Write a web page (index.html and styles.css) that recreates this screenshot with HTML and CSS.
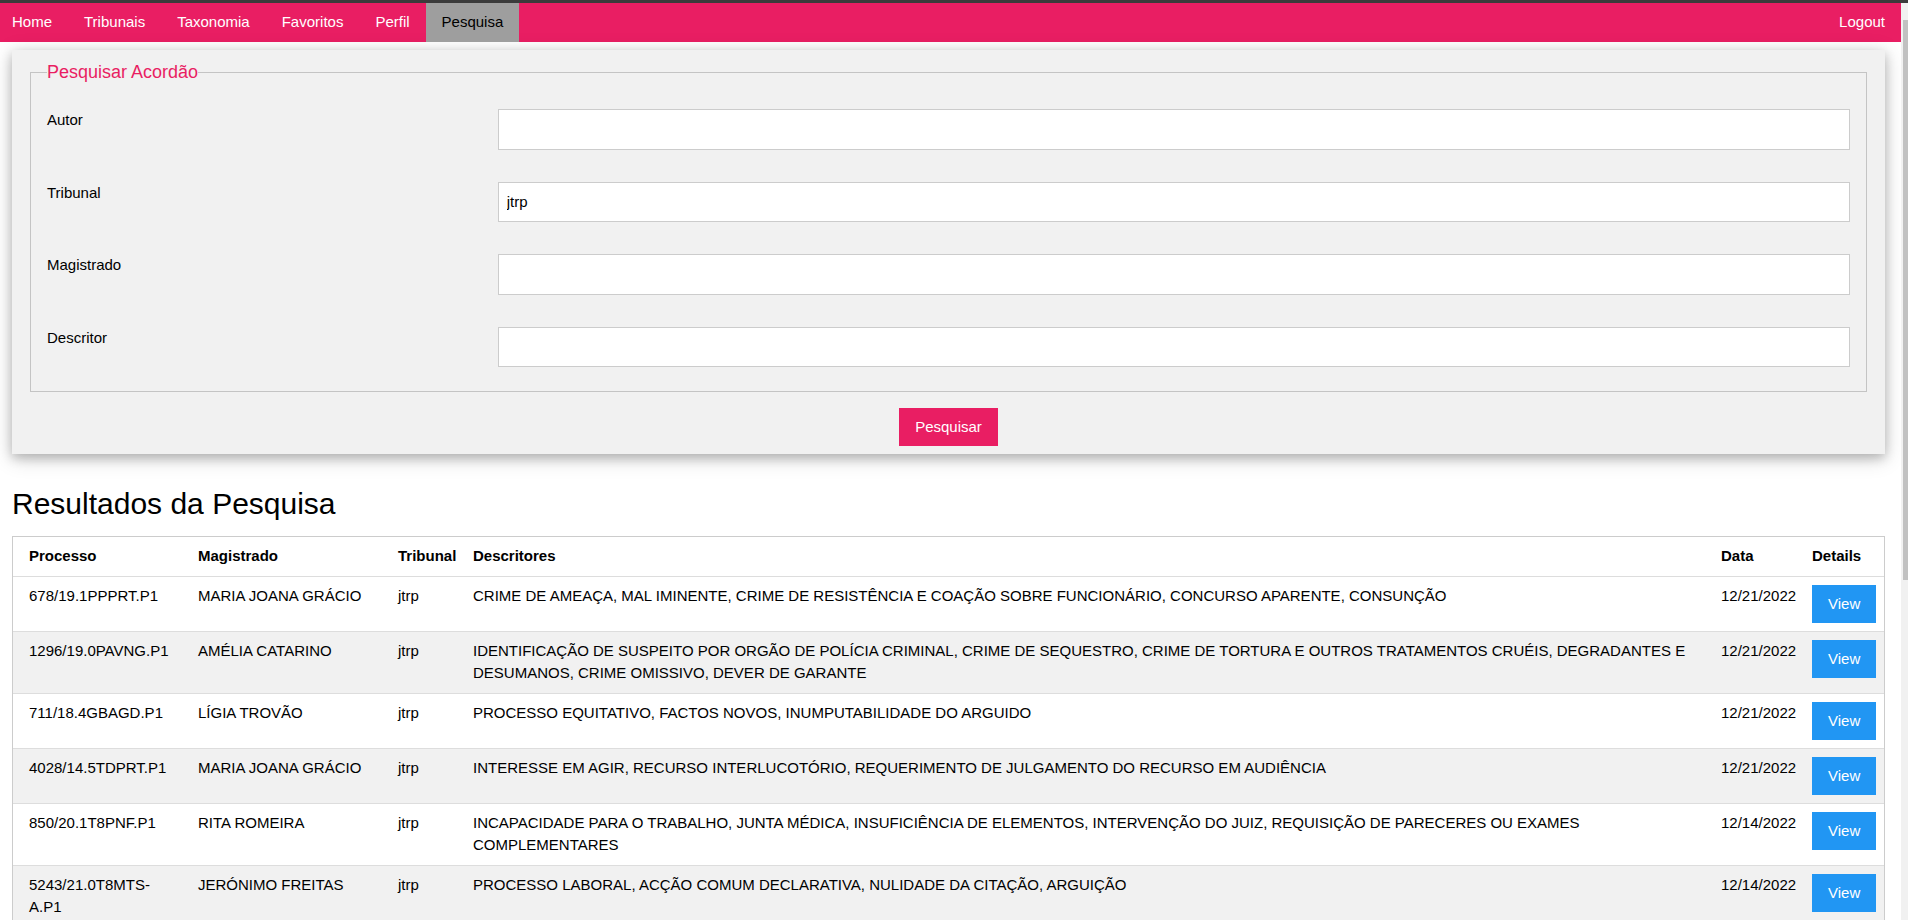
FILE: index.html
```html
<!DOCTYPE html>
<html lang="pt">
<head>
<meta charset="utf-8">
<title>Pesquisa</title>
<link rel="stylesheet" href="styles.css">
</head>
<body>
<div class="topband"></div>
<div class="page">
  <nav class="navbar">
    <div class="nav-left">
      <a class="nav-item nav-first">Home</a>
      <a class="nav-item">Tribunais</a>
      <a class="nav-item">Taxonomia</a>
      <a class="nav-item">Favoritos</a>
      <a class="nav-item">Perfil</a>
      <a class="nav-item nav-active">Pesquisa</a>
    </div>
    <a class="nav-item">Logout</a>
  </nav>

  <main class="content">
    <section class="card">
      <form class="search-form">
        <fieldset class="search-fieldset">
          <legend class="search-legend">Pesquisar Acordão</legend>
          <div class="form-row">
            <label class="form-label">Autor</label>
            <div class="form-field"><input class="form-input" type="text"></div>
          </div>
          <div class="form-row">
            <label class="form-label">Tribunal</label>
            <div class="form-field"><input class="form-input" type="text" value="jtrp"></div>
          </div>
          <div class="form-row">
            <label class="form-label">Magistrado</label>
            <div class="form-field"><input class="form-input" type="text"></div>
          </div>
          <div class="form-row">
            <label class="form-label">Descritor</label>
            <div class="form-field"><input class="form-input" type="text"></div>
          </div>
        </fieldset>
        <div class="form-actions">
          <button class="btn btn-pink" type="button">Pesquisar</button>
        </div>
      </form>
    </section>

    <h2 class="results-title">Resultados da Pesquisa</h2>

    <table class="results">
      <colgroup>
        <col class="col-processo">
        <col class="col-magistrado">
        <col class="col-tribunal">
        <col class="col-descritores">
        <col class="col-data">
        <col class="col-details">
      </colgroup>
      <thead>
        <tr>
          <th>Processo</th>
          <th>Magistrado</th>
          <th>Tribunal</th>
          <th>Descritores</th>
          <th>Data</th>
          <th>Details</th>
        </tr>
      </thead>
      <tbody>
        <tr>
          <td>678/19.1PPPRT.P1</td>
          <td>MARIA JOANA GRÁCIO</td>
          <td>jtrp</td>
          <td>CRIME DE AMEAÇA, MAL IMINENTE, CRIME DE RESISTÊNCIA E COAÇÃO SOBRE FUNCIONÁRIO, CONCURSO APARENTE, CONSUNÇÃO</td>
          <td>12/21/2022</td>
          <td><button class="btn btn-blue" type="button">View</button></td>
        </tr>
        <tr>
          <td>1296/19.0PAVNG.P1</td>
          <td>AMÉLIA CATARINO</td>
          <td>jtrp</td>
          <td>IDENTIFICAÇÃO DE SUSPEITO POR ORGÃO DE POLÍCIA CRIMINAL, CRIME DE SEQUESTRO, CRIME DE TORTURA E OUTROS TRATAMENTOS CRUÉIS, DEGRADANTES E DESUMANOS, CRIME OMISSIVO, DEVER DE GARANTE</td>
          <td>12/21/2022</td>
          <td><button class="btn btn-blue" type="button">View</button></td>
        </tr>
        <tr>
          <td>711/18.4GBAGD.P1</td>
          <td>LÍGIA TROVÃO</td>
          <td>jtrp</td>
          <td>PROCESSO EQUITATIVO, FACTOS NOVOS, INUMPUTABILIDADE DO ARGUIDO</td>
          <td>12/21/2022</td>
          <td><button class="btn btn-blue" type="button">View</button></td>
        </tr>
        <tr>
          <td>4028/14.5TDPRT.P1</td>
          <td>MARIA JOANA GRÁCIO</td>
          <td>jtrp</td>
          <td>INTERESSE EM AGIR, RECURSO INTERLUCOTÓRIO, REQUERIMENTO DE JULGAMENTO DO RECURSO EM AUDIÊNCIA</td>
          <td>12/21/2022</td>
          <td><button class="btn btn-blue" type="button">View</button></td>
        </tr>
        <tr>
          <td>850/20.1T8PNF.P1</td>
          <td>RITA ROMEIRA</td>
          <td>jtrp</td>
          <td>INCAPACIDADE PARA O TRABALHO, JUNTA MÉDICA, INSUFICIÊNCIA DE ELEMENTOS, INTERVENÇÃO DO JUIZ, REQUISIÇÃO DE PARECERES OU EXAMES COMPLEMENTARES</td>
          <td>12/14/2022</td>
          <td><button class="btn btn-blue" type="button">View</button></td>
        </tr>
        <tr>
          <td>5243/21.0T8MTS-A.P1</td>
          <td>JERÓNIMO FREITAS</td>
          <td>jtrp</td>
          <td>PROCESSO LABORAL, ACÇÃO COMUM DECLARATIVA, NULIDADE DA CITAÇÃO, ARGUIÇÃO</td>
          <td>12/14/2022</td>
          <td><button class="btn btn-blue" type="button">View</button></td>
        </tr>
      </tbody>
    </table>
  </main>
</div>
<div class="scrollbar"><div class="scrollbar-thumb"></div></div>
</body>
</html>
```

FILE: styles.css
```css
html {
  overflow: hidden;
}

body {
  margin: 0;
  font-family: "Liberation Sans", Arial, sans-serif;
  font-size: 15px;
  line-height: 1.5;
  color: #000;
  background: #fff;
}

.topband {
  height: 3px;
  background: #3b3b3b;
}

.page {
  margin-right: 7px;
}

/* ---------- navbar ---------- */
.navbar {
  display: flex;
  justify-content: space-between;
  background: #e91e63;
}

.nav-left {
  display: flex;
}

.nav-item {
  display: block;
  padding: 8px 16px;
  color: #fff;
  text-decoration: none;
  white-space: nowrap;
}

.nav-first {
  padding-left: 12px;
}

.nav-active {
  background: #9e9e9e;
  color: #000;
}

/* ---------- content ---------- */
.content {
  padding: 0 16px 0 12px;
}

.card {
  margin-top: 8px;
  padding: 9px 16px 8px;
  background: #f1f1f1;
  box-shadow: 0 4px 10px 0 rgba(0, 0, 0, 0.2), 0 4px 20px 0 rgba(0, 0, 0, 0.19);
}

.search-form {
  margin: 0;
}

.search-fieldset {
  margin: 0 2px;
  padding: 7.5px 16px;
  border: 1px solid #c4c4c4;
  display: flex;
  flex-direction: column;
}

.search-legend {
  padding: 0;
  color: #e91e63;
  font-size: 18px;
  line-height: 27px;
}

.form-row {
  display: flex;
  margin: 16px 0;
}

.form-label {
  width: 25%;
  flex: none;
}

.form-field {
  flex: 1;
}

.form-input {
  display: block;
  box-sizing: border-box;
  width: 100%;
  padding: 8px;
  border: 1px solid #ccc;
  background: #fff;
  font-family: "Liberation Sans", Arial, sans-serif;
  font-size: 15px;
  line-height: 22.5px;
  height: 40.5px;
  color: #000;
  outline: none;
}

.form-actions {
  margin-top: 16px;
  display: flex;
  justify-content: center;
}

.btn {
  display: inline-block;
  border: none;
  padding: 8px 16px;
  font-family: "Liberation Sans", Arial, sans-serif;
  font-size: 15px;
  line-height: 22.5px;
  color: #fff;
  cursor: pointer;
  vertical-align: middle;
}

.btn-pink {
  background: #e91e63;
}

.btn-blue {
  background: #2196f3;
}

.results-title {
  margin: 27px 0 10px;
  font-size: 30px;
  font-weight: 400;
  line-height: 45px;
}

/* ---------- table ---------- */
.results {
  width: 1873px;
  table-layout: fixed;
  border-collapse: separate;
  border-spacing: 0;
  border: 1px solid #ccc;
}

.col-processo { width: 177px; }
.col-magistrado { width: 200px; }
.col-tribunal { width: 75px; }
.col-descritores { width: 1248px; }
.col-data { width: 91px; }
.col-details { width: 80px; }

.results th,
.results td {
  padding: 8px;
  text-align: left;
  vertical-align: top;
  border-bottom: 1px solid #ddd;
}

.results th:first-child,
.results td:first-child {
  padding-left: 16px;
}

.results th {
  font-weight: bold;
}

.results td .btn {
  display: block;
  height: 38px;
}

.results tbody tr:nth-child(odd) {
  background: #fff;
}

.results tbody tr:nth-child(even) {
  background: #f1f1f1;
}

/* ---------- fake browser scrollbar ---------- */
.scrollbar {
  position: fixed;
  top: 3px;
  right: 0;
  bottom: 0;
  width: 7px;
  background: #f1f1f1;
}

.scrollbar-thumb {
  margin: 17px 0 0 2px;
  height: 560px;
  background: #c1c1c1;
}
```
